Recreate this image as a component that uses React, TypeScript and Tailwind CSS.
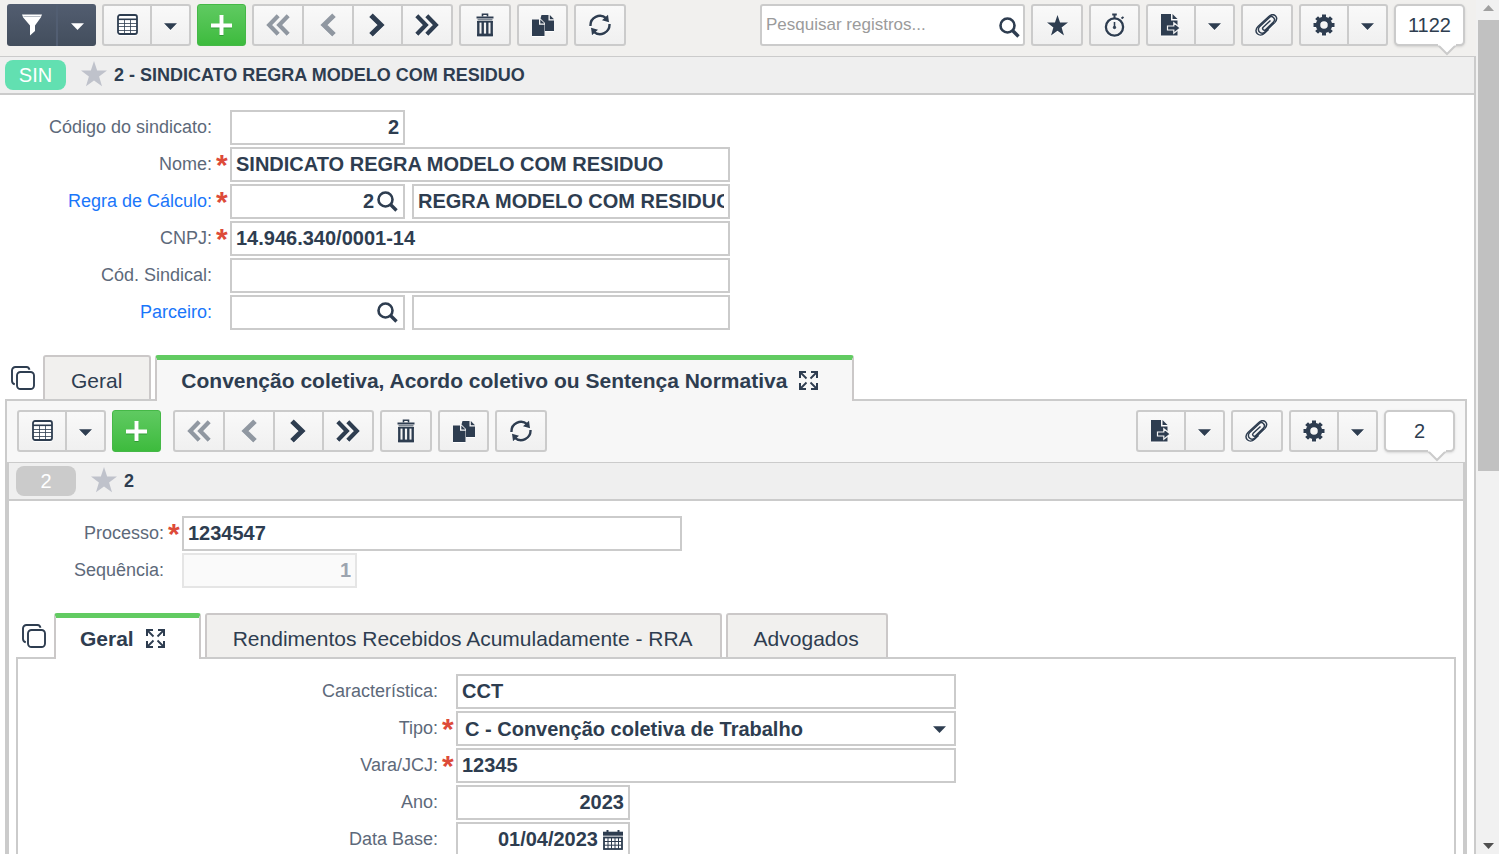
import { useState } from 'react';
import type { ReactNode } from 'react';
import clsx from 'clsx';

function CaretIcon() {
  return (
    <svg width="13" height="7" viewBox="0 0 13 7" fill="currentColor">
      <path d="M0 .300h13L6.500 7z" />
    </svg>
  );
}

function FilterIcon() {
  return (
    <svg width="20" height="22" viewBox="0 0 20 22">
      <path d="M0 .5h20l-1.200 3L13 11.500V17l-5 4.500v-10L1.200 3.500z" fill="#fff" />
      <path d="M1.500 2.500h17" stroke="#b9bec6" strokeWidth="1" />
    </svg>
  );
}

function GridIcon() {
  return (
    <svg width="21" height="22" viewBox="0 0 21 22" fill="none" stroke="currentColor">
      <rect x="1" y="1" width="19" height="19" rx="2" strokeWidth="1.800" fill="#fff" />
      <path d="M1 5.300h19" strokeWidth="1.600" />
      <path d="M1 9.500h19M1 12.500h19M1 16.500h19M7.500 5.500v15M13.500 5.500v15" strokeWidth="1" opacity=".8" />
    </svg>
  );
}

function PlusIcon() {
  return (
    <svg width="21" height="21" viewBox="0 0 21 21" className="drop-shadow-[0_1px_0_#2f9a35]">
      <path d="M10.500 0v20M0 10.500h21" stroke="#fff" strokeWidth="4" />
    </svg>
  );
}

function ChevronIcon({ double, flip }: { double?: boolean; flip?: boolean }) {
  return (
    <svg
      width={double ? 24 : 16}
      height="24"
      viewBox={double ? '0 0 24 24' : '0 0 16 24'}
      fill="none"
      stroke="currentColor"
      className={flip ? 'rotate-180' : ''}
    >
      {double ? (
        <path d="M1.800 2.800l9 9.200-9 9.200M11.800 2.800l9 9.200-9 9.200" strokeWidth="4.200" />
      ) : (
        <path d="M2 2.200L12 12 2 21.800" strokeWidth="5" />
      )}
    </svg>
  );
}

function TrashIcon() {
  return (
    <svg width="18" height="24" viewBox="0 0 18 24" fill="none" stroke="currentColor">
      <path d="M6.500 3.500V1.200h5v2.300" strokeWidth="1.600" />
      <path d="M.5 4.500h17" strokeWidth="2" />
      <path d="M1.500 6.800h15" strokeWidth="1.600" opacity=".6" />
      <path d="M2.300 8v14h13.400V8M6.700 8.500v13M11.300 8.500v13" strokeWidth="2.400" />
      <path d="M1.100 8.800h15.800" strokeWidth="1.600" />
      <path d="M1.100 22h15.800" strokeWidth="2.400" />
    </svg>
  );
}

function DuplicateIcon() {
  return (
    <svg width="22" height="21" viewBox="0 0 22 21" fill="currentColor">
      <path d="M9.500 0h7v5.500H22V16h-9V8L8.500 3.500z" />
      <path d="M17.800 0L22 4.200h-4.200z" />
      <path d="M0 4.500h7v5.200h5.500V21H0z" />
      <path d="M8.300 4.500l4.200 4h-4.200z" />
    </svg>
  );
}

function RefreshIcon() {
  return (
    <svg width="22" height="22" viewBox="0 0 22 22" fill="none">
      <path
        d="M1.500 12A9.500 9.500 0 0 1 17.200 4.200M20.500 10A9.500 9.500 0 0 1 4.800 17.800"
        stroke="currentColor"
        strokeWidth="2.400"
      />
      <path d="M19 .8l1 7.500-7-2zM3 21.200l-1-7.500 7 2z" fill="currentColor" />
    </svg>
  );
}

function SearchIcon() {
  return (
    <svg width="21" height="21" viewBox="0 0 21 21" fill="none" stroke="currentColor">
      <circle cx="8.500" cy="8.500" r="7" strokeWidth="2.600" />
      <path d="M13 13l6.500 6.500" strokeWidth="3.400" />
    </svg>
  );
}

function StarIcon({ size }: { size: number }) {
  return (
    <svg width={size} height={size} viewBox="0 0 24 24" fill="currentColor">
      <path d="M12 0l2.900 8.700H24l-7.300 5.600 2.700 9L12 17.900l-7.400 5.400 2.700-9L0 8.700h9.100z" />
    </svg>
  );
}

function TimerIcon() {
  return (
    <svg width="22" height="24" viewBox="0 0 22 24" fill="none" stroke="currentColor">
      <circle cx="10.500" cy="14" r="8.600" strokeWidth="2.300" />
      <path d="M8.200 1.500h4.600M10.500 1.500v4" strokeWidth="2" />
      <path d="M17.500 5.500l2-1.500" strokeWidth="2" />
      <path d="M10.500 9v6" strokeWidth="1.600" />
      <circle cx="10.500" cy="14.500" r="1.200" fill="currentColor" strokeWidth="1" />
    </svg>
  );
}

function ExportIcon() {
  return (
    <svg width="20" height="22" viewBox="0 0 20 22">
      <path d="M0 0h10v6.500h6.500V21.500H0z" fill="currentColor" />
      <path d="M11.500 0l5 5h-5z" fill="currentColor" />
      <path
        d="M6.500 12h6.300V8.800L19.300 14l-6.500 5.200V16H6.500z"
        fill="currentColor"
        stroke="#f5f5f5"
        strokeWidth="1.200"
      />
    </svg>
  );
}

function ClipIcon() {
  return (
    <svg width="24" height="22" viewBox="0 0 24 22" fill="none" stroke="currentColor" strokeWidth="1.500">
      <path d="M15.500 6.500l-7.300 6.800a1.600 1.600 0 0 0 2.300 2.400l8-7.700a3 3 0 0 0-4.300-4.400l-9.700 9.200a3.700 3.700 0 0 0 5.200 5.300L19.800 8.500" />
      <path d="M19.800 8.500c5-5-1-10.500-6-6L3 12.500c-5.500 5.500 1.500 11.500 6.500 6.700l4-3.800" />
    </svg>
  );
}

function GearIcon() {
  return (
    <svg width="22" height="22" viewBox="0 0 22 22" fill="none" stroke="currentColor">
      <circle cx="11" cy="11" r="6" strokeWidth="4.500" />
      <path
        d="M11 .5v3M11 18.500v3M.5 11h3M18.500 11h3M3.600 3.600l2.100 2.100M16.300 16.300l2.100 2.100M18.400 3.600l-2.100 2.100M5.700 16.300l-2.100 2.100"
        strokeWidth="4"
      />
    </svg>
  );
}

function StackIcon() {
  return (
    <svg width="24" height="24" viewBox="0 0 24 24" fill="none" stroke="currentColor" strokeWidth="1.900">
      <rect x="6" y="6" width="17" height="17" rx="3.500" />
      <path d="M18.500 3.800A3.500 3.500 0 0 0 15.500 1H4.500A3.500 3.500 0 0 0 1 4.500v10.500a3.500 3.500 0 0 0 2.800 3.300" />
    </svg>
  );
}

function ExpandIcon() {
  return (
    <svg width="19" height="19" viewBox="0 0 19 19" fill="none" stroke="currentColor" strokeWidth="2">
      <path d="M1 7V1h6M12 1h6v6M18 12v6h-6M7 18H1v-6" />
      <path d="M1 1l6.500 6.500M18 1l-6.500 6.500M18 18l-6.500-6.500M1 18l6.500-6.500" strokeWidth="1.800" />
    </svg>
  );
}

function CalendarIcon() {
  return (
    <svg width="20" height="20" viewBox="0 0 20 20" fill="none" stroke="currentColor">
      <path d="M4.500 0v3M15.500 0v3" strokeWidth="2" />
      <path d="M0 3.700h20" strokeWidth="4" />
      <rect x="1" y="7.500" width="18" height="11.500" strokeWidth="1.800" />
      <path d="M1 11.500h18M1 15.200h18M5 7v12M8.500 7v12M12 7v12M15.500 7v12" strokeWidth="1" />
    </svg>
  );
}

function Group({ children, className }: { children: ReactNode; className: string }) {
  return (
    <div
      className={clsx(
        'flex h-[42px] shrink-0 divide-x-2 divide-[#cbcbcb] rounded-[3px] border-2 border-[#cbcbcb] bg-linear-to-b from-[#f9f9f9] to-[#f0f0f0]',
        className
      )}
    >
      {children}
    </div>
  );
}

function ToolButton({ label, children, disabled, narrow }: any) {
  return (
    <button
      type="button"
      aria-label={label}
      disabled={disabled}
      className={clsx('flex items-center justify-center', narrow ? 'w-[37px] pt-[3px]' : 'flex-1')}
    >
      <span className={clsx('drop-shadow-[0_1px_0_#fff]', disabled && 'opacity-50')}>{children}</span>
    </button>
  );
}

function Toolbar({ main, count }: { main?: boolean; count: string }) {
  return (
    <div
      role="toolbar"
      className={clsx('flex gap-[6px] pb-[10px]', main ? 'bg-[#f1f0ee] pt-1 pr-[11px] pl-[7px]' : 'px-[10px] pt-[9px]')}
    >
      {main && (
        <div className="flex h-[42px] w-[89px] shrink-0 rounded-[3px] bg-linear-to-b from-[#525d70] to-[#434e5d] text-white">
          <button type="button" aria-label="Filtrar" className="flex w-[51px] items-center justify-center border-r-2 border-[#525e72]">
            <FilterIcon />
          </button>
          <button type="button" aria-label="Opções de filtro" className="flex flex-1 items-center justify-center pt-[3px]">
            <CaretIcon />
          </button>
        </div>
      )}
      <Group className="w-[89px]">
        <ToolButton label="Modo grade"><GridIcon /></ToolButton>
        <ToolButton label="Opções da grade" narrow><CaretIcon /></ToolButton>
      </Group>
      <button
        type="button"
        aria-label="Adicionar"
        className="flex h-[42px] w-[49px] shrink-0 items-center justify-center rounded-[3px] border border-[#45b847] bg-linear-to-b from-[#5fca61] to-[#3dbb3d]"
      >
        <PlusIcon />
      </button>
      <Group className={clsx('w-[201px]', !main && 'ml-[6px]')}>
        <ToolButton label="Primeiro" disabled><ChevronIcon double flip /></ToolButton>
        <ToolButton label="Anterior" disabled><ChevronIcon flip /></ToolButton>
        <ToolButton label="Próximo"><ChevronIcon /></ToolButton>
        <ToolButton label="Último"><ChevronIcon double /></ToolButton>
      </Group>
      <Group className="w-[52px]">
        <ToolButton label="Excluir"><TrashIcon /></ToolButton>
      </Group>
      <Group className="w-[51px]">
        <ToolButton label="Duplicar"><DuplicateIcon /></ToolButton>
      </Group>
      <Group className="w-[52px]">
        <ToolButton label="Atualizar"><RefreshIcon /></ToolButton>
      </Group>

      <div className="flex-1" />

      {main && (
        <>
          <div className="flex h-[42px] w-[265px] items-center rounded-[3px] border-2 border-[#cbcbcb] bg-white pr-[3px] pl-1">
            <input
              type="text"
              aria-label="Pesquisar registros"
              placeholder="Pesquisar registros..."
              className="min-w-0 flex-1 text-[17px] outline-0 placeholder:text-[#9b9b9b]"
            />
            <button type="button" aria-label="Pesquisar" className="pt-1"><SearchIcon /></button>
          </div>
          <Group className="w-[52px]">
            <ToolButton label="Favoritos"><StarIcon size={21} /></ToolButton>
          </Group>
          <Group className="w-[51px]">
            <ToolButton label="Histórico"><TimerIcon /></ToolButton>
          </Group>
        </>
      )}
      <Group className="w-[89px]">
        <ToolButton label="Exportar"><ExportIcon /></ToolButton>
        <ToolButton label="Opções de exportação" narrow><CaretIcon /></ToolButton>
      </Group>
      <Group className="w-[52px]">
        <ToolButton label="Anexos"><ClipIcon /></ToolButton>
      </Group>
      <Group className="w-[89px]">
        <ToolButton label="Configurações"><GearIcon /></ToolButton>
        <ToolButton label="Mais configurações" narrow><CaretIcon /></ToolButton>
      </Group>
      <div className="relative flex h-[42px] w-[71px] shrink-0 items-center justify-center rounded-[5px] border-2 border-[#cbcbcb] bg-white text-[20px] shadow-sm">
        {count}
        <svg width="20" height="12" viewBox="0 0 20 12" className="absolute top-[38px] right-[6px]">
          <path d="M1 1l9 9 9-9" fill="#fff" stroke="#cbcbcb" strokeWidth="2" />
          <path d="M1 0h18v1.500H1z" fill="#fff" />
        </svg>
      </div>
    </div>
  );
}

function RecordBar({ badge, title, main }: { badge: string; title: string; main?: boolean }) {
  return (
    <div
      className={clsx(
        'flex h-[39px] items-center border-t border-b-2 border-[#cbcbcb] bg-[#efefef]',
        main ? 'pl-[5px]' : 'pl-[7px]'
      )}
    >
      <span
        className={clsx(
          'flex h-[30px] items-center justify-center rounded-[8px] text-[20px] text-white',
          main ? 'w-[61px] bg-[#62e0b1]' : 'w-[60px] bg-[#cbcbcb]'
        )}
      >
        {badge}
      </span>
      <button type="button" aria-label="Favoritar" className="mr-[7px] ml-[15px] pb-[3px] text-[#bfc2cb]">
        <StarIcon size={26} />
      </button>
      <h1 className="text-[18px] font-bold">{title}</h1>
    </div>
  );
}

function Field({ id, label, labelWidth, required, link, children }: any) {
  return (
    <div className="flex h-[35px] items-center">
      <label
        htmlFor={id}
        className={clsx('shrink-0 text-right text-[18px]', labelWidth, link ? 'text-[#1a76fa]' : 'text-[#5d697a]')}
      >
        {link ? <a href="#">{label}:</a> : `${label}:`}
      </label>
      <span className="h-[35px] w-[18px] shrink-0 pl-1 text-[30px] leading-[35px] font-bold text-[#dd4b39]">
        {required ? '*' : ''}
      </span>
      {children}
    </div>
  );
}

function TextBox({ id, value, width = 'w-[500px]', right, disabled, label }: any) {
  return (
    <input
      id={id}
      type="text"
      aria-label={label}
      defaultValue={value}
      disabled={disabled}
      className={clsx(
        'h-[35px] border-2 px-1 text-[20px] font-bold outline-0',
        width,
        right && 'text-right',
        disabled ? 'border-[#e5e5e5] bg-[#fafafa] text-[#9ca4af]' : 'border-[#cbcbcb] bg-white'
      )}
    />
  );
}

function IconBox({ id, value, action, icon, className = 'w-[175px] gap-[3px]' }: any) {
  return (
    <div className={clsx('flex h-[35px] items-center border-2 border-[#cbcbcb] bg-white pr-[5px]', className)}>
      <input
        id={id}
        type="text"
        defaultValue={value}
        className="h-full min-w-0 flex-1 text-right text-[20px] font-bold outline-0"
      />
      <button type="button" aria-label={action}>{icon}</button>
    </div>
  );
}

function Tabs({ tabs, initial, bg, className }: any) {
  const [active, setActive] = useState(initial);

  return (
    <div className={clsx('relative z-10 mt-[25px] -mb-[2px] flex h-[46px] items-start', className)}>
      <button type="button" aria-label="Abrir em abas" className="mt-[11px] mr-2">
        <StackIcon />
      </button>
      <div role="tablist" className="flex items-start gap-1">
        {tabs.map((tab: string) => (
          <button
            key={tab}
            type="button"
            role="tab"
            aria-selected={tab === active}
            onClick={() => setActive(tab)}
            className={clsx(
              'flex items-center rounded-t-[3px] border-x-2 border-[#cbc8c8] text-[21px] whitespace-nowrap',
              tab === active
                ? ['h-[46px] gap-3 border-t-[5px] border-t-[#62cb62] pr-[34px] pl-6 font-bold', bg]
                : 'h-[44px] border-t-2 bg-[#f1f0ee] pt-[6px] pr-[27px] pl-[26px]'
            )}
          >
            {tab}
            {tab === active && <ExpandIcon />}
          </button>
        ))}
      </div>
    </div>
  );
}

function PageScrollbar() {
  return (
    <div aria-hidden="true" className="flex w-[23px] shrink-0 flex-col items-center bg-[#f1f1f1] pl-[2px]">
      <svg width="11" height="6" viewBox="0 0 11 6" className="mt-[5px] mb-[9px] shrink-0">
        <path d="M0 6l5.500-6L11 6z" fill="#a0a0a0" />
      </svg>
      <div className="h-[451px] w-full bg-[#c1c1c1]" />
      <svg width="11" height="6" viewBox="0 0 11 6" className="mt-auto mb-[5px] shrink-0">
        <path d="M0 0l5.500 6L11 0z" fill="#505050" />
      </svg>
    </div>
  );
}

function UnionForm() {
  const w = 'w-[212px]';

  return (
    <form className="flex flex-col gap-[2px] pt-[15px]">
      <Field id="codigo" label="Código do sindicato" labelWidth={w}>
        <TextBox id="codigo" value="2" width="w-[175px]" right />
      </Field>
      <Field id="nome" label="Nome" labelWidth={w} required>
        <TextBox id="nome" value="SINDICATO REGRA MODELO COM RESIDUO" />
      </Field>
      <Field id="regra" label="Regra de Cálculo" labelWidth={w} required link>
        <div className="flex gap-[7px]">
          <IconBox id="regra" value="2" action="Buscar regra" icon={<SearchIcon />} />
          <TextBox label="Descrição da regra" value="REGRA MODELO COM RESIDUO" width="w-[318px]" />
        </div>
      </Field>
      <Field id="cnpj" label="CNPJ" labelWidth={w} required>
        <TextBox id="cnpj" value="14.946.340/0001-14" />
      </Field>
      <Field id="sindical" label="Cód. Sindical" labelWidth={w}>
        <TextBox id="sindical" />
      </Field>
      <Field id="parceiro" label="Parceiro" labelWidth={w} link>
        <div className="flex gap-[7px]">
          <IconBox id="parceiro" action="Buscar parceiro" icon={<SearchIcon />} />
          <TextBox label="Nome do parceiro" width="w-[318px]" />
        </div>
      </Field>
    </form>
  );
}

function DetailForm() {
  const w = 'w-[420px]';

  return (
    <form className="flex flex-col gap-[2px] pt-[15px] pb-6">
      <Field id="caracteristica" label="Característica" labelWidth={w}>
        <TextBox id="caracteristica" value="CCT" />
      </Field>
      <Field id="tipo" label="Tipo" labelWidth={w} required>
        <div className="relative">
          <select
            id="tipo"
            className="h-[35px] w-[500px] appearance-none border-2 border-[#cbcbcb] bg-white pl-[7px] text-[20px] font-bold outline-0"
          >
            <option>C - Convenção coletiva de Trabalho</option>
          </select>
          <span className="pointer-events-none absolute top-[15px] right-[10px]">
            <CaretIcon />
          </span>
        </div>
      </Field>
      <Field id="vara" label="Vara/JCJ" labelWidth={w} required>
        <TextBox id="vara" value="12345" />
      </Field>
      <Field id="ano" label="Ano" labelWidth={w}>
        <TextBox id="ano" value="2023" width="w-[174px]" right />
      </Field>
      <Field id="database" label="Data Base" labelWidth={w}>
        <IconBox
          id="database"
          value="01/04/2023"
          action="Abrir calendário"
          icon={<CalendarIcon />}
          className="w-[174px] gap-[5px]"
        />
      </Field>
    </form>
  );
}

export default function App() {
  return (
    <div className="flex h-screen overflow-hidden bg-white font-['Liberation_Sans',Arial,sans-serif] text-[#2e3d50]">
      <main className="flex min-w-0 flex-1 flex-col">
        <Toolbar main count="1122" />
        <section className="flex flex-1 flex-col border-r-2 border-[#cbcbcb]">
          <RecordBar main badge="SIN" title="2 - SINDICATO REGRA MODELO COM RESIDUO" />
          <UnionForm />
          <Tabs
            className="pl-[11px]"
            bg="bg-[#f7f7f7]"
            initial="Convenção coletiva, Acordo coletivo ou Sentença Normativa"
            tabs={['Geral', 'Convenção coletiva, Acordo coletivo ou Sentença Normativa']}
          />
          <div className="mr-[7px] ml-[5px] flex flex-1 flex-col border-x-2 border-t-2 border-[#cbcbcb] bg-[#f7f7f7]">
            <Toolbar count="2" />
            <div className="flex flex-1 flex-col border-x-2 border-[#cbcbcb] bg-white">
              <RecordBar badge="2" title="2" />
              <form className="flex flex-col gap-[2px] pt-[15px]">
                <Field id="processo" label="Processo" labelWidth="w-[155px]" required>
                  <TextBox id="processo" value="1234547" />
                </Field>
                <Field id="sequencia" label="Sequência" labelWidth="w-[155px]">
                  <TextBox id="sequencia" value="1" width="w-[175px]" right disabled />
                </Field>
              </form>
              <Tabs
                className="pl-[13px]"
                bg="bg-white"
                initial="Geral"
                tabs={['Geral', 'Rendimentos Recebidos Acumuladamente - RRA', 'Advogados']}
              />
              <div className="mx-[7px] flex-1 border-x-2 border-t-2 border-[#cbcbcb]">
                <DetailForm />
              </div>
            </div>
          </div>
        </section>
      </main>
      <PageScrollbar />
    </div>
  );
}
